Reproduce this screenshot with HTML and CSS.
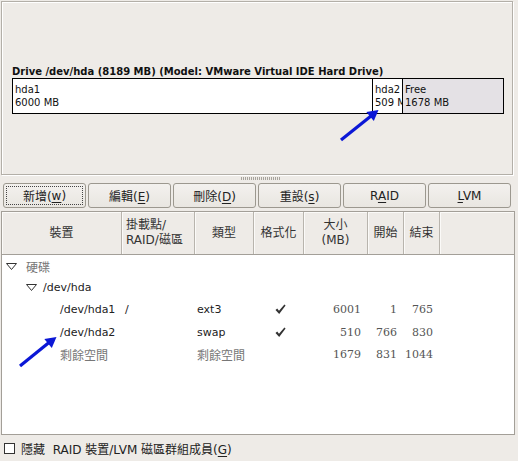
FILE: index.html
```html
<!DOCTYPE html>
<html>
<head>
<meta charset="utf-8">
<link rel="stylesheet" href="styles.css">
</head>
<body>
<div class="panel">
  <div class="drive-label">Drive /dev/hda (8189 MB) (Model: VMware Virtual IDE Hard Drive)</div>
  <div class="drive-bar">
    <div class="seg seg-hda1"><span>hda1</span><span>6000 MB</span></div>
    <div class="seg seg-hda2"><span>hda2</span><span>509 MB</span></div>
    <div class="seg seg-free"><span>Free</span><span>1678 MB</span></div>
  </div>
</div>
<div class="splitter"><div class="grip"></div></div>
<div class="buttons">
  <button class="btn focus"><span class="focus-rect">新增(<u>w</u>)</span></button>
  <button class="btn"><span>編輯(<u>E</u>)</span></button>
  <button class="btn"><span>刪除(<u>D</u>)</span></button>
  <button class="btn"><span>重設(<u>s</u>)</span></button>
  <button class="btn"><span>R<u>A</u>ID</span></button>
  <button class="btn"><span><u>L</u>VM</span></button>
</div>
<div class="table">
  <div class="row head">
    <div class="hc center">裝置</div>
    <div class="hc left">掛載點/<br>RAID/磁區</div>
    <div class="hc center">類型</div>
    <div class="hc center">格式化</div>
    <div class="hc center">大小<br>(MB)</div>
    <div class="hc center">開始</div>
    <div class="hc center">結束</div>
    <div class="hc last"></div>
  </div>
  <div class="body">
    <div class="row r1">
      <div class="c dev lvl0"><span class="exp"><svg width="11" height="7" viewBox="0 0 11 7"><path d="M0.5 0.5 H10.5 L5.5 6.5 Z" fill="none" stroke="#333" stroke-width="1"/></svg></span><span class="muted">硬碟</span></div>
    </div>
    <div class="row r2">
      <div class="c dev lvl1"><span class="exp"><svg width="11" height="7" viewBox="0 0 11 7"><path d="M0.5 0.5 H10.5 L5.5 6.5 Z" fill="none" stroke="#333" stroke-width="1"/></svg></span>/dev/hda</div>
    </div>
    <div class="row r3">
      <div class="c dev lvl2">/dev/hda1</div>
      <div class="c mnt">/</div>
      <div class="c type">ext3</div>
      <div class="c fmt"><svg class="chk" width="11" height="11" viewBox="0 0 11 11"><path d="M0.5 6 L2.2 4.6 L4 6.8 L9.4 0.6 L10.6 1.6 L4.2 10 Z" fill="#333"/></svg></div>
      <div class="c num">6001</div>
      <div class="c num">1</div>
      <div class="c num">765</div>
    </div>
    <div class="row r4">
      <div class="c dev lvl2">/dev/hda2</div>
      <div class="c mnt"></div>
      <div class="c type">swap</div>
      <div class="c fmt"><svg class="chk" width="11" height="11" viewBox="0 0 11 11"><path d="M0.5 6 L2.2 4.6 L4 6.8 L9.4 0.6 L10.6 1.6 L4.2 10 Z" fill="#333"/></svg></div>
      <div class="c num">510</div>
      <div class="c num">766</div>
      <div class="c num">830</div>
    </div>
    <div class="row r5">
      <div class="c dev lvl2 muted">剩餘空間</div>
      <div class="c mnt"></div>
      <div class="c type muted">剩餘空間</div>
      <div class="c fmt"></div>
      <div class="c num">1679</div>
      <div class="c num">831</div>
      <div class="c num">1044</div>
    </div>
  </div>
</div>
<div class="bottom">
  <span class="checkbox"></span>
  <span class="cb-label">隱藏&nbsp; RAID 裝置/LVM 磁區群組成員(<u>G</u>)</span>
</div>
<svg class="arrows" width="518" height="461" viewBox="0 0 518 461">
  <line x1="341" y1="140" x2="371" y2="116" stroke="#0b17d6" stroke-width="3.2"/>
  <polygon points="378.5,110 373.8,121 366.3,112" fill="#0b17d6"/>
  <line x1="20" y1="366" x2="49" y2="342.5" stroke="#0b17d6" stroke-width="3.2"/>
  <polygon points="56.5,337 51.8,348 44.3,339" fill="#0b17d6"/>
</svg>
</body>
</html>
```
FILE: styles.css
```css
html, body {
  margin: 0;
  padding: 0;
}
body {
  width: 518px;
  height: 461px;
  overflow: hidden;
  background: #eeebe7;
  font-family: "DejaVu Sans", "Noto Sans CJK TC", sans-serif;
  color: #222;
  position: relative;
  padding-top: 1px;
  box-sizing: border-box;
}
.panel {
  margin-left: 1px;
  width: 512px;
  height: 174px;
  box-sizing: border-box;
  border: 1px solid #b3afa8;
  box-shadow: inset 1px 1px 0 #ffffff, 1px 1px 0 #ffffff;
  display: flex;
  flex-direction: column;
  justify-content: center;
  padding: 0 0 0 10px;
}
.drive-label {
  font-weight: bold;
  font-size: 10px;
  line-height: 13px;
  color: #111;
  margin-top: 2px;
}
.drive-bar {
  display: flex;
  width: 492px;
  height: 36px;
  box-sizing: border-box;
  border: 1px solid #000;
  background: #fff;
}
.seg {
  display: flex;
  flex-direction: column;
  padding: 4px 0 0 2px;
  font-size: 10px;
  line-height: 13px;
  color: #111;
  overflow: hidden;
  white-space: nowrap;
  box-sizing: border-box;
}
.seg-hda1 { width: 360px; border-right: 1px solid #000; }
.seg-hda2 { width: 30px; border-right: 1px solid #000; }
.seg-free { flex: 1; background: #e4e1e5; }
.splitter {
  height: 8px;
  display: flex;
  justify-content: center;
  align-items: flex-start;
}
.grip {
  margin-top: 2px;
  margin-left: 4px;
  width: 40px;
  height: 3px;
  background: repeating-linear-gradient(90deg, #a7a39c 0 1px, transparent 1px 2px);
}
.buttons {
  display: flex;
  gap: 2px;
  padding-left: 3px;
  height: 25px;
}
.btn {
  width: 83px;
  height: 25px;
  box-sizing: border-box;
  border: 1px solid #9c988f;
  border-radius: 3px;
  background: linear-gradient(#f3f1ee, #e9e6e1);
  font-family: "DejaVu Sans", "Noto Sans CJK TC", sans-serif;
  font-size: 12px;
  color: #222;
  padding: 0;
  display: flex;
  align-items: center;
  justify-content: center;
}
.btn u { text-decoration-thickness: 1px; text-underline-offset: 2px; }
.btn.focus { padding: 2px; }
.focus-rect {
  flex: 1;
  align-self: stretch;
  display: flex;
  align-items: center;
  justify-content: center;
  border: 1px dotted #444;
}
.table {
  margin: 3px 0 0 1px;
  width: 514px;
  height: 224px;
  box-sizing: border-box;
  border: 1px solid #a39f98;
  background: #fff;
}
.row {
  display: grid;
  grid-template-columns: 120px 73px 59px 50px 64px 36px 36px 1fr;
}
.head {
  height: 43px;
  background: #eeebe7;
  border-bottom: 1px solid #a39f98;
  box-sizing: border-box;
}
.hc {
  font-size: 12px;
  line-height: 15px;
  color: #333;
  display: flex;
  flex-direction: column;
  justify-content: center;
  border-right: 1px solid #b8b4ad;
  box-shadow: inset 1px 1px 0 #fbfaf8;
}
.hc.center { align-items: center; text-align: center; }
.hc.left { padding-left: 4px; }
.hc.last { border-right: none; }
.c {
  font-size: 11px;
  color: #222;
  display: flex;
  align-items: center;
  white-space: nowrap;
}
.r1 { height: 22px; }
.r2 { height: 21px; }
.r3 { height: 23px; }
.r4 { height: 23px; }
.r5 { height: 20px; }
.r1, .r2 { grid-template-columns: 1fr; }
.dev.lvl0 { padding-left: 4px; }
.dev.lvl1 { padding-left: 24px; }
.dev.lvl2 { padding-left: 58px; }
.exp { width: 20px; display: inline-flex; align-items: center; }
.dev.lvl1 .exp { width: 17px; }
.muted { color: #777; font-size: 12px; }
.mnt { padding-left: 3px; }
.type { padding-left: 2px; }
.fmt { justify-content: center; padding-left: 2px; }
.num {
  justify-content: flex-end;
  padding-right: 7px;
  font-family: "DejaVu Serif", "Liberation Serif", serif;
  font-size: 11px;
  color: #555;
}
.bottom {
  display: flex;
  align-items: center;
  height: 26px;
  padding-left: 4px;
  font-size: 12px;
  color: #222;
}
.checkbox {
  width: 11px;
  height: 11px;
  box-sizing: border-box;
  border: 1px solid #333;
  background: #fff;
  margin-right: 6px;
}
.cb-label u { text-underline-offset: 2px; }
.arrows {
  position: absolute;
  left: 0;
  top: 0;
  pointer-events: none;
}
```
